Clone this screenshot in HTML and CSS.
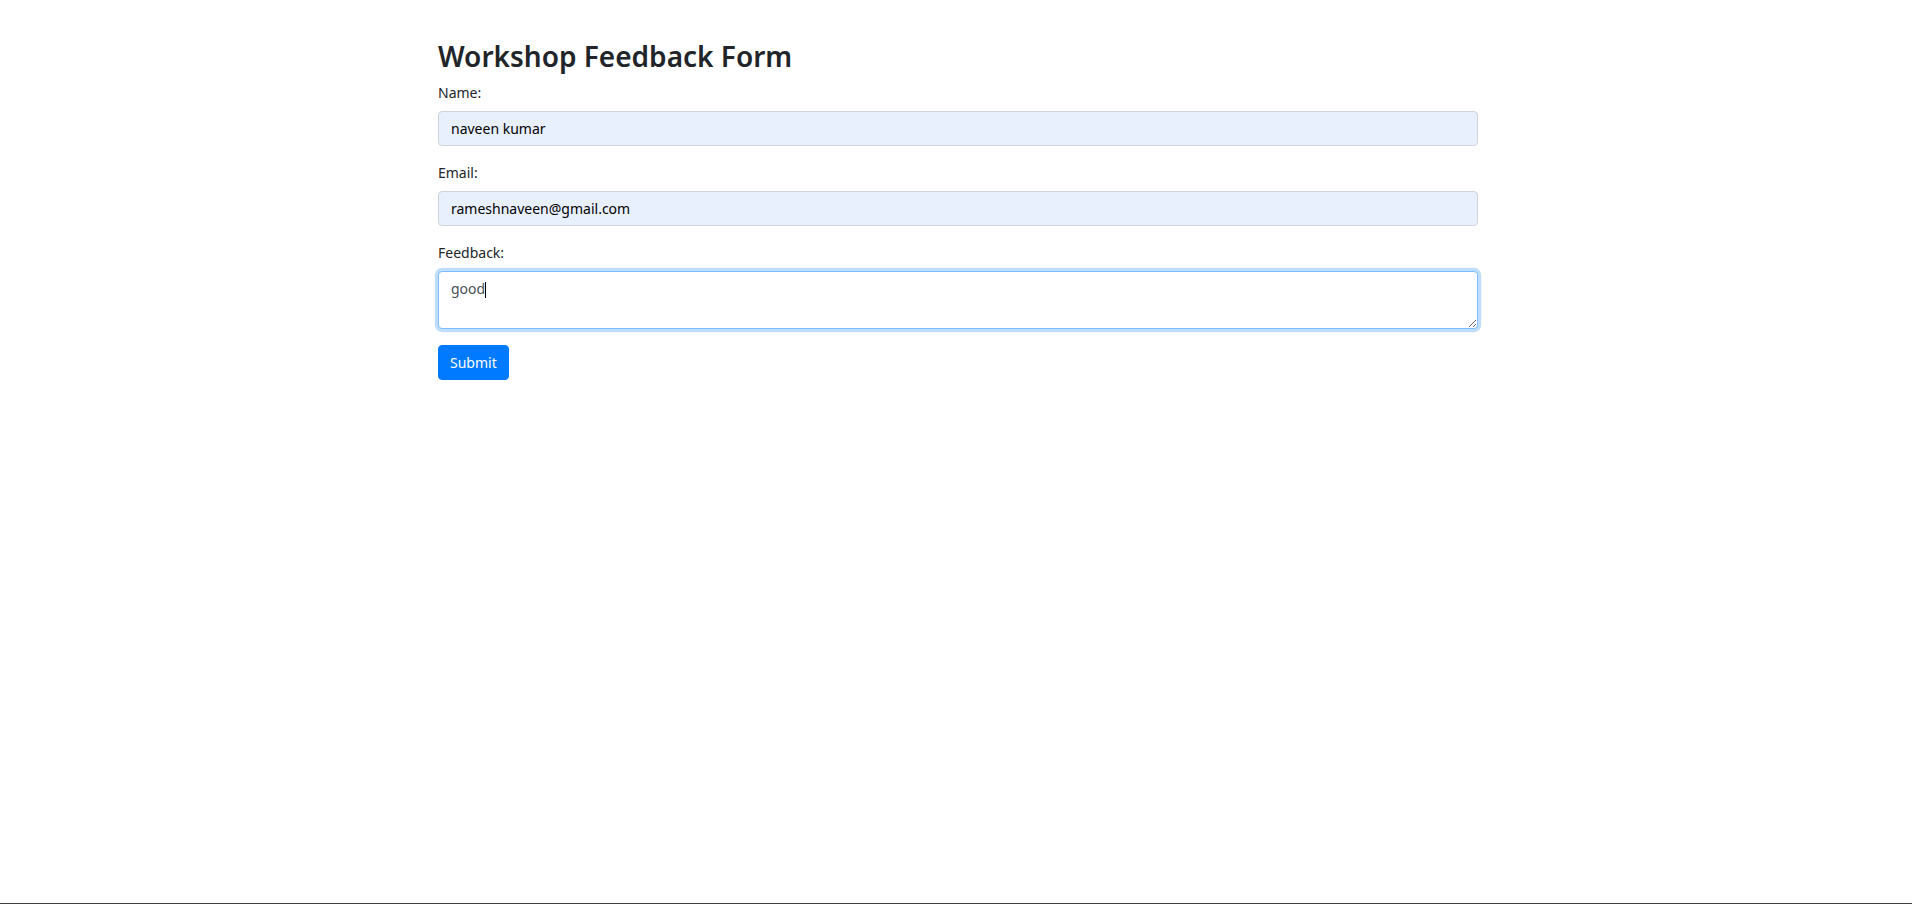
FILE: index.html
```html
<!DOCTYPE html>
<html lang="en">
<head>
<meta charset="utf-8">
<title>Workshop Feedback Form</title>
<link rel="stylesheet" href="styles.css">
</head>
<body>
<div class="page">
  <div class="container">
    <h2 class="title">Workshop Feedback Form</h2>
    <form class="form">
      <div class="form-group">
        <label class="label" for="name">Name:</label>
        <input class="form-control autofilled" id="name" type="text" value="naveen kumar">
      </div>
      <div class="form-group">
        <label class="label" for="email">Email:</label>
        <input class="form-control autofilled" id="email" type="email" value="rameshnaveen@gmail.com">
      </div>
      <div class="form-group">
        <label class="label" for="feedback">Feedback:</label>
        <div class="textarea-wrap">
          <textarea class="form-control textarea is-focused" id="feedback" rows="2">good</textarea>
          <span class="caret"></span>
        </div>
      </div>
      <button class="btn" type="button">Submit</button>
    </form>
  </div>
</div>
</body>
</html>
```

FILE: styles.css
```css
* { box-sizing: border-box; }
html, body { margin: 0; padding: 0; }
body {
  font-family: "Noto Sans", "Open Sans", sans-serif;
  font-size: 14px;
  line-height: 1.5;
  color: #212529;
  background: #fff;
}
.page {
  min-height: 100vh;
  border-bottom: 1px solid #3f3f3f;
}
.container {
  max-width: 1044px;
  margin: 0 auto;
  padding: 40px 0 0 4px;
}
.title {
  margin: 0 0 8px;
  font-size: 28px;
  font-weight: 600;
  line-height: 1.2;
  padding-top: 1px;
  margin-top: -1px;
}
.form-group { margin-bottom: 16px; }
.label {
  display: inline-block;
  margin-bottom: 8px;
}
.form-control {
  display: block;
  width: 100%;
  height: 35px;
  padding: 6px 12px;
  font-family: inherit;
  font-size: 14px;
  line-height: 1.5;
  color: #495057;
  background: #fff;
  border: 1px solid #ced4da;
  border-radius: 4px;
  outline: none;
}
.autofilled {
  background: #e8f0fe;
  color: #000;
}
.textarea-wrap { position: relative; }
.textarea {
  height: 58px;
  resize: vertical;
}
.is-focused {
  border-color: #80bdff;
  box-shadow: 0 0 0 3.2px rgba(0, 123, 255, 0.25);
}
.caret {
  position: absolute;
  left: 47px;
  top: 11px;
  width: 1px;
  height: 16px;
  background: #000;
}
.btn {
  display: inline-block;
  padding: 6px 11px;
  font-family: inherit;
  font-size: 14px;
  line-height: 1.5;
  color: #fff;
  background: #007bff;
  border: 1px solid #007bff;
  border-radius: 4px;
  cursor: pointer;
}
```
